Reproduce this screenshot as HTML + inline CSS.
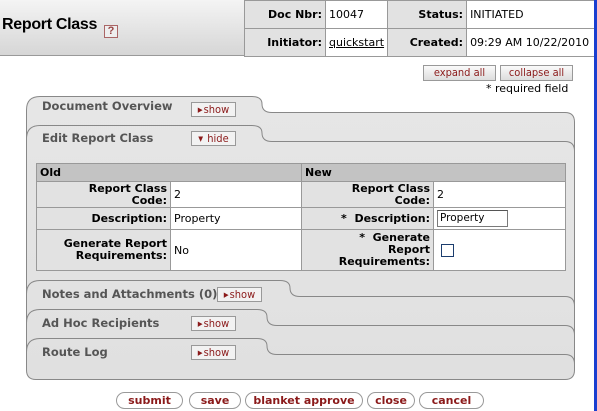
<!DOCTYPE html>
<html><head><style>
*{margin:0;padding:0;box-sizing:border-box}
body{width:597px;height:411px;background:#fff;position:relative;overflow:hidden;font-family:"DejaVu Sans",Verdana,sans-serif;font-size:11px;color:#000}
.abs{position:absolute}
#hdr{left:0;top:0;width:597px;height:56px;background:linear-gradient(#f4f4f4,#d6d6d6);border-bottom:1px solid #999}
#title{left:2px;top:16px;font-family:"Liberation Sans",Arial,sans-serif;font-weight:bold;font-size:16px;letter-spacing:-0.3px}
#help{left:104px;top:25px;width:14px;height:13px;border:1px solid #a66;background:#eee;color:#944;font:bold 11px "Liberation Sans",Arial;text-align:center;line-height:11px}
table.doc{position:absolute;left:244px;top:0;border-collapse:collapse}
table.doc td{border:1px solid #999;height:28px;padding:0 3px;font-size:11px;white-space:nowrap}
table.doc td.l{background:#e2e2e2;font-weight:bold;text-align:right}
table.doc td.v{background:#fff}
.btn{position:absolute;height:16px;border:1px solid #999;background:linear-gradient(#fafafa,#ddd);color:#8b1a1a;font:11px "DejaVu Sans Condensed","DejaVu Sans",sans-serif;text-align:center;line-height:14px}
.tbtn{position:absolute;height:15px;width:45px;border:1px solid #999;background:#f2f2f2;color:#8b1a1a;font:11px "DejaVu Sans Condensed","DejaVu Sans",sans-serif;line-height:13px;text-align:center}
.tbtn i{font-style:normal;font-size:7px;vertical-align:1px;margin-right:1px}
.tl{position:absolute;left:42px;font-weight:bold;color:#555;font-size:11.5px}
table.m{position:absolute;left:36px;top:163px;width:530px;border-collapse:collapse;background:#fff}
table.m td{border:1px solid #999;font-size:11px;padding:0 3px}
table.m td.h{background:#c3c3c3;font-weight:bold;height:18px}
table.m td.l{background:#e2e2e2;font-weight:bold;text-align:right;line-height:12px}
.ab{position:absolute;top:392px;height:17px;border:1px solid #999;border-radius:9px;background:#fff;color:#8b1a1a;font:bold 11px "DejaVu Sans",sans-serif;text-align:center;line-height:15px}
</style></head><body>
<div id="hdr" class="abs"></div>
<div id="title" class="abs">Report Class</div>
<div id="help" class="abs">?</div>
<table class="doc">
<tr><td class="l" style="width:81px">Doc Nbr:</td><td class="v" style="width:61px">10047</td><td class="l" style="width:79px">Status:</td><td class="v" style="width:128px">INITIATED</td></tr>
<tr><td class="l">Initiator:</td><td class="v"><u>quickstart</u></td><td class="l">Created:</td><td class="v">09:29 AM 10/22/2010</td></tr>
</table>
<div class="abs" style="left:594px;top:0;width:3px;height:411px;background:#1a3fd0"></div>
<div class="btn" style="left:423px;top:65px;width:73px">expand all</div>
<div class="btn" style="left:500px;top:65px;width:73px">collapse all</div>
<div class="abs" style="left:486px;top:82px;font-size:11px">* required field</div>

<svg class="abs" style="left:0;top:0" width="597" height="411">
<defs><linearGradient id="g" x1="0" y1="0" x2="0" y2="1"><stop offset="0" stop-color="#e6e6e6"/><stop offset="1" stop-color="#e0e0e0"/></linearGradient></defs>
<path d="M26.5,110 Q26.5,96.5 40,96.5 L252,96.5 Q262,96.5 262,104 Q262,112.5 272,112.5 L565,112.5 Q574.5,112.5 574.5,122 L574.5,370 Q574.5,379.5 565,379.5 L36,379.5 Q26.5,379.5 26.5,370 Z" fill="url(#g)" stroke="#888"/>
<g fill="none" stroke="#888">
<path d="M26.5,139 Q26.5,125.5 40,125.5 L252,125.5 Q262,125.5 262,133 Q262,141.5 272,141.5 L565,141.5 Q574.5,141.5 574.5,151"/>
<path d="M26.5,294 Q26.5,280.5 40,280.5 L280,280.5 Q290,280.5 290,288 Q290,296.5 300,296.5 L565,296.5 Q574.5,296.5 574.5,306"/>
<path d="M26.5,323 Q26.5,309.5 40,309.5 L257,309.5 Q267,309.5 267,317 Q267,325.5 277,325.5 L565,325.5 Q574.5,325.5 574.5,335"/>
<path d="M26.5,352 Q26.5,338.5 40,338.5 L257,338.5 Q267,338.5 267,346 Q267,354.5 277,354.5 L565,354.5 Q574.5,354.5 574.5,364"/>
</g>
</svg>

<div class="tl" style="top:99px">Document Overview</div>
<div class="tbtn" style="left:191px;top:102px"><i>&#9654;</i>show</div>
<div class="tl" style="top:131px">Edit Report Class</div>
<div class="tbtn" style="left:191px;top:131px"><i>&#9660;</i> hide</div>

<table class="m">
<tr><td class="h" colspan="2" style="width:265px">Old</td><td class="h" colspan="2">New</td></tr>
<tr style="height:26px"><td class="l" style="width:134px">Report Class<br>Code:</td><td style="width:131px">2</td><td class="l" style="width:132px">Report Class<br>Code:</td><td>2</td></tr>
<tr style="height:22px"><td class="l">Description:</td><td>Property</td><td class="l">*&nbsp; Description:</td><td><span style="display:inline-block;width:71px;height:17px;border:1px solid #7a7a7a;border-top-color:#555;font-size:10.5px;padding-left:2px;line-height:15px">Property</span></td></tr>
<tr style="height:41px"><td class="l">Generate Report<br>Requirements:</td><td>No</td><td class="l">*&nbsp; Generate<br>Report<br>Requirements:</td><td><span style="display:inline-block;width:13px;height:13px;border:1px solid #1c3d6e;margin-left:4px;vertical-align:middle"></span></td></tr>
</table>

<div class="tl" style="top:287px">Notes and Attachments (0)</div>
<div class="tbtn" style="left:217px;top:287px"><i>&#9654;</i>show</div>
<div class="tl" style="top:316px">Ad Hoc Recipients</div>
<div class="tbtn" style="left:191px;top:316px"><i>&#9654;</i>show</div>
<div class="tl" style="top:345px">Route Log</div>
<div class="tbtn" style="left:191px;top:345px"><i>&#9654;</i>show</div>

<div class="ab" style="left:116px;width:67px">submit</div>
<div class="ab" style="left:189px;width:52px">save</div>
<div class="ab" style="left:245px;width:118px">blanket approve</div>
<div class="ab" style="left:367px;width:48px">close</div>
<div class="ab" style="left:419px;width:65px">cancel</div>
</body></html>
